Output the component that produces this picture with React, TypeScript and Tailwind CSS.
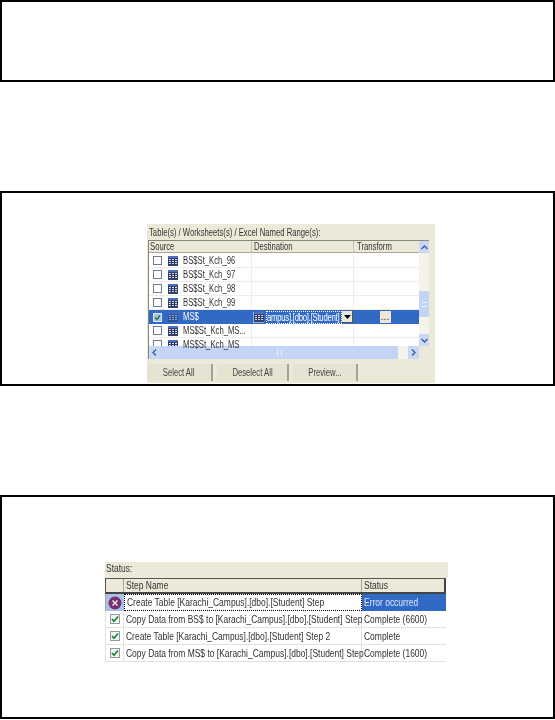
import React from "react";

const FONT = "font-['Liberation_Sans',Arial,sans-serif]";

const SOURCE_ROWS = ["BS$St_Kch_96", "BS$St_Kch_97", "BS$St_Kch_98", "BS$St_Kch_99"];

const STEP_ROWS = [
  { step: "Copy Data from BS$ to [Karachi_Campus].[dbo].[Student] Step", status: "Complete (6600)" },
  { step: "Create Table [Karachi_Campus].[dbo].[Student] Step 2", status: "Complete" },
  { step: "Copy Data from MS$ to [Karachi_Campus].[dbo].[Student] Step", status: "Complete (1600)" },
];

// the screenshots in the reference are squeezed sideways, so their text is too
function Narrow({ children, center = false }: { children: React.ReactNode; center?: boolean }) {
  return (
    <span
      className={`block w-[130%] shrink-0 scale-x-[0.77] whitespace-nowrap ${
        center ? "origin-center text-center" : "origin-left"
      }`}
    >
      {children}
    </span>
  );
}

export default function App() {
  return (
    <div className={`w-[555px] h-[720px] bg-white flex flex-col ${FONT}`}>
      <div className="h-[82px] border-2 border-black shrink-0" />
      <div className="h-[195px] mt-[109px] border-2 border-black shrink-0 flex flex-col items-start pl-[145px] pt-[31px]">
        <SourcePanel />
      </div>
      <div className="h-[224px] mt-[109px] border-2 border-black shrink-0 flex flex-col items-start pl-[103px] pt-[65px]">
        <StatusPanel />
      </div>
    </div>
  );
}

function SourcePanel() {
  return (
    <div className="w-[288px] h-[159px] bg-[#ece9d8] blur-[0.4px] text-[10px] text-[#333] flex flex-col">
      <div className="h-[16px] pl-[2px] pt-[2px] leading-[14px]">
        <Narrow>Table(s) / Worksheets(s) / Excel Named Range(s):</Narrow>
      </div>
      <div className="w-[281px] ml-[1px] h-[119px] bg-white border-l border-t border-[#8a8778] flex flex-col overflow-hidden">
        <div className="flex-1 min-h-0 flex">
          <div className="w-[270px] flex flex-col">
            <div className="h-[12px] shrink-0 bg-[#ece9d8] flex leading-[12px] border-b border-[#aca899]">
              <div className="w-[103px] pl-[1px] border-r border-[#c5c2b2]"><Narrow>Source</Narrow></div>
              <div className="w-[102px] pl-[2px] border-r border-[#c5c2b2]"><Narrow>Destination</Narrow></div>
              <div className="flex-1 pl-[3px]"><Narrow>Transform</Narrow></div>
            </div>
            <div className="h-[1px] shrink-0" />
            {SOURCE_ROWS.map((name) => (
              <SourceRow key={name} name={name} />
            ))}
            <SelectedRow />
            <SourceRow name="MS$St_Kch_MS..." />
            <SourceRow name="MS$St_Kch_MS" />
          </div>
          <VerticalScroll />
        </div>
        <HorizontalScroll />
      </div>
      <div className="flex mt-[5px] text-[#444]">
        <div className="w-[66px] h-[17px] bg-[#e6e3d3] border-r-2 border-[#a5a294] flex items-center justify-center"><Narrow center>Select All</Narrow></div>
        <div className="w-[72px] h-[17px] ml-[4px] bg-[#e6e3d3] border-r-2 border-[#a5a294] flex items-center justify-center"><Narrow center>Deselect All</Narrow></div>
        <div className="w-[65px] h-[17px] ml-[4px] bg-[#e6e3d3] border-r-2 border-[#a5a294] flex items-center justify-center"><Narrow center>Preview...</Narrow></div>
      </div>
    </div>
  );
}

function SourceRow({ name }: { name: string }) {
  return (
    <div className="h-[14px] shrink-0 flex items-center border-b border-[#f0eee4]">
      <div className="w-[103px] h-full flex items-center border-r border-[#f0eee4]">
        <div className="w-[9px] h-[9px] shrink-0 ml-[4px] border border-[#6f7d8c] bg-white" />
        <SheetIcon className="ml-[6px]" />
        <div className="ml-[5px] flex-1 min-w-0 leading-[12px]"><Narrow>{name}</Narrow></div>
      </div>
      <div className="w-[102px] h-full border-r border-[#f0eee4]" />
    </div>
  );
}

function SelectedRow() {
  return (
    <div className="h-[14px] shrink-0 bg-[#316ac5] text-white flex items-center">
      <div className="w-[103px] h-full flex items-center">
        <div className="w-[9px] h-[9px] shrink-0 ml-[4px] border border-[#dfe8f7] bg-[#a9c2e8] flex items-center justify-center">
          <svg width="7" height="7" viewBox="0 0 7 7"><path d="M1 3.5 L3 5.5 L6 1.5" fill="none" stroke="#1f7a3a" strokeWidth="1.4" /></svg>
        </div>
        <SheetIcon className="ml-[6px] opacity-60" />
        <div className="ml-[5px] flex-1 min-w-0 leading-[12px]"><Narrow>MS$</Narrow></div>
      </div>
      <div className="w-[102px] h-full flex items-center">
        <div className="ml-[1px] w-[11px] h-[11px] shrink-0 bg-[#8fb0e3] flex items-center justify-center">
          <SheetIcon />
        </div>
        <div className="ml-[2px] w-[76px] h-[13px] shrink-0 border border-dotted border-white leading-[11px] tracking-[-0.3px]">
          <Narrow>ampus].[dbo].[Student]</Narrow>
        </div>
        <div className="w-[11px] h-[12px] shrink-0 bg-[#ece9d8] border-r border-b border-[#555] flex items-center justify-center">
          <svg width="7" height="4" viewBox="0 0 7 4"><path d="M0 0 H7 L3.5 4 Z" fill="#000" /></svg>
        </div>
      </div>
      <div className="flex-1 h-full flex justify-center pt-[1px] pr-[3px]">
        <div className="w-[11px] h-[12px] bg-[#ece9d8] text-[#333] leading-[12px] text-center">...</div>
      </div>
    </div>
  );
}

function SheetIcon({ className = "" }: { className?: string }) {
  return (
    <svg width="10" height="10" viewBox="0 0 10 10" className={`shrink-0 ${className}`}>
      <rect x="0" y="0" width="10" height="10" fill="#34426f" />
      <rect x="0" y="0" width="10" height="2" fill="#4a6fc0" />
      <rect x="1" y="3" width="8" height="1" fill="#cfd8e6" />
      <rect x="1" y="5" width="8" height="1" fill="#cfd8e6" />
      <rect x="1" y="7" width="8" height="1" fill="#cfd8e6" />
      <rect x="3" y="3" width="1" height="6" fill="#2a2f4a" />
      <rect x="6" y="3" width="1" height="6" fill="#2a2f4a" />
    </svg>
  );
}

function VerticalScroll() {
  return (
    <div className="w-[10px] bg-[#f4f3ec] flex flex-col">
      <div className="h-[12px] bg-[#c9d8f5] flex items-center justify-center">
        <svg width="7" height="5" viewBox="0 0 7 5"><path d="M0.5 4 L3.5 1 L6.5 4" fill="none" stroke="#3b5fa8" strokeWidth="1.4" /></svg>
      </div>
      <div className="h-[38px]" />
      <div className="h-[26px] bg-[#c3d4f7] flex items-center justify-center">
        <div className="w-[5px] h-[5px] border-y border-[#eef3fd]" />
      </div>
      <div className="flex-1" />
      <div className="h-[12px] bg-[#c9d8f5] flex items-center justify-center">
        <svg width="7" height="5" viewBox="0 0 7 5"><path d="M0.5 1 L3.5 4 L6.5 1" fill="none" stroke="#3b5fa8" strokeWidth="1.4" /></svg>
      </div>
    </div>
  );
}

function HorizontalScroll() {
  return (
    <div className="h-[13px] shrink-0 flex bg-[#f4f3ec]">
      <div className="w-[11px] bg-[#c9d8f5] flex items-center justify-center">
        <svg width="5" height="7" viewBox="0 0 5 7"><path d="M4 0.5 L1 3.5 L4 6.5" fill="none" stroke="#3b5fa8" strokeWidth="1.4" /></svg>
      </div>
      <div className="w-[238px] bg-[#c3d4f7] flex items-center justify-center">
        <div className="w-[5px] h-[5px] border-x border-[#eef3fd]" />
      </div>
      <div className="w-[10px]" />
      <div className="w-[11px] bg-[#c9d8f5] flex items-center justify-center">
        <svg width="5" height="7" viewBox="0 0 5 7"><path d="M1 0.5 L4 3.5 L1 6.5" fill="none" stroke="#3b5fa8" strokeWidth="1.4" /></svg>
      </div>
      <div className="flex-1 bg-[#ece9d8]" />
    </div>
  );
}

function StatusPanel() {
  return (
    <div className="w-[343px] blur-[0.4px] text-[11px] text-[#333] flex flex-col">
      <div className="h-[16px] bg-[#ece9d8] pl-[1px] leading-[12px]"><Narrow>Status:</Narrow></div>
      <div className="h-[16px] bg-[#ece9d8] flex border-t border-l border-[#555] border-r-2 border-r-[#444] border-b-2 border-b-[#444] mr-[2px] leading-[13px]">
        <div className="w-[18px] border-r border-[#aca899]" />
        <div className="w-[238px] pl-[2px] border-r border-[#aca899]"><Narrow>Step Name</Narrow></div>
        <div className="flex-1 pl-[2px]"><Narrow>Status</Narrow></div>
      </div>
      <div className="h-[17px] flex border-l border-[#aca899] mr-[2px]">
        <div className="w-[18px] shrink-0 bg-[#a9c2e8] flex items-center justify-center">
          <svg width="14" height="14" viewBox="0 0 14 14">
            <circle cx="7" cy="7" r="6.5" fill="#7a2f72" />
            <path d="M4.5 4.5 L9.5 9.5 M9.5 4.5 L4.5 9.5" stroke="#f3dbe8" strokeWidth="1.6" />
          </svg>
        </div>
        <div className="w-[238px] shrink-0 pl-[2px] border border-dotted border-black leading-[15px]">
          <Narrow>Create Table [Karachi_Campus].[dbo].[Student] Step</Narrow>
        </div>
        <div className="flex-1 pl-[2px] bg-[#316ac5] text-[#dfe8f7] leading-[17px]"><Narrow>Error occurred</Narrow></div>
      </div>
      {STEP_ROWS.map((r) => (
        <div key={r.step} className="h-[17px] flex border-l border-b border-[#e4e2d8] mr-[2px]">
          <div className="w-[18px] shrink-0 border-r border-[#e4e2d8] flex items-center justify-center">
            <div className="w-[10px] h-[10px] border border-[#8c9aa8] bg-[#f6f6f0] flex items-center justify-center">
              <svg width="8" height="8" viewBox="0 0 8 8"><path d="M1 4 L3 6.2 L7 1.5" fill="none" stroke="#17803a" strokeWidth="1.7" /></svg>
            </div>
          </div>
          <div className="w-[238px] shrink-0 pl-[2px] border-r border-[#e4e2d8] leading-[16px]"><Narrow>{r.step}</Narrow></div>
          <div className="flex-1 pl-[2px] leading-[16px]"><Narrow>{r.status}</Narrow></div>
        </div>
      ))}
    </div>
  );
}
